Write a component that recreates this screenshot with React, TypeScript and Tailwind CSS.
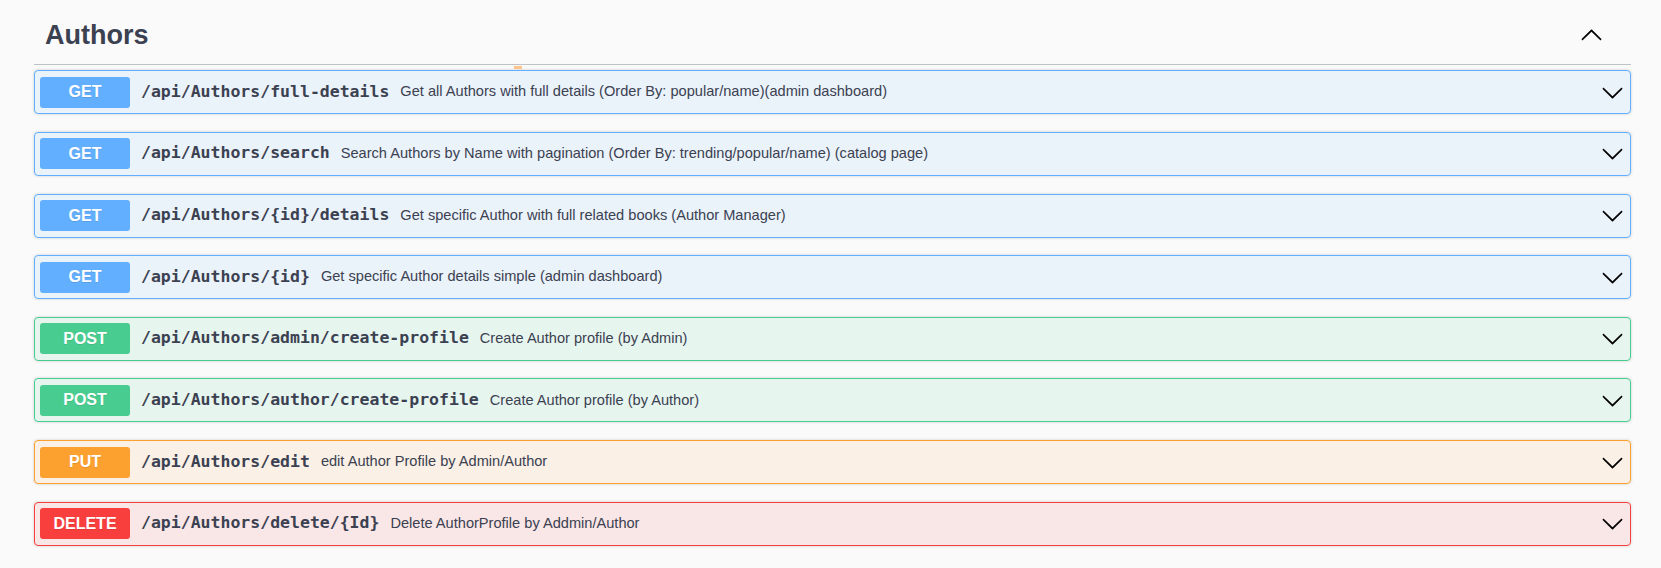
import React from "react";

type Method = "GET" | "POST" | "PUT" | "DELETE";

interface Endpoint {
  method: Method;
  path: string;
  summary: string;
}

const ENDPOINTS: Endpoint[] = [
  { method: "GET", path: "/api/Authors/full-details", summary: "Get all Authors with full details (Order By: popular/name)(admin dashboard)" },
  { method: "GET", path: "/api/Authors/search", summary: "Search Authors by Name with pagination (Order By: trending/popular/name) (catalog page)" },
  { method: "GET", path: "/api/Authors/{id}/details", summary: "Get specific Author with full related books (Author Manager)" },
  { method: "GET", path: "/api/Authors/{id}", summary: "Get specific Author details simple (admin dashboard)" },
  { method: "POST", path: "/api/Authors/admin/create-profile", summary: "Create Author profile (by Admin)" },
  { method: "POST", path: "/api/Authors/author/create-profile", summary: "Create Author profile (by Author)" },
  { method: "PUT", path: "/api/Authors/edit", summary: "edit Author Profile by Admin/Author" },
  { method: "DELETE", path: "/api/Authors/delete/{Id}", summary: "Delete AuthorProfile by Addmin/Author" },
];

// full class strings per method so tailwind picks them up
const METHOD_STYLES: Record<Method, { row: string; badge: string }> = {
  GET: { row: "border-[#61affe] bg-[#61affe]/10", badge: "bg-[#61affe]" },
  POST: { row: "border-[#49cc90] bg-[#49cc90]/10", badge: "bg-[#49cc90]" },
  PUT: { row: "border-[#fca130] bg-[#fca130]/10", badge: "bg-[#fca130]" },
  DELETE: { row: "border-[#f93e3e] bg-[#f93e3e]/10", badge: "bg-[#f93e3e]" },
};

function Arrow({ up = false }: { up?: boolean }) {
  return (
    <svg
      xmlns="http://www.w3.org/2000/svg"
      width="23"
      height="23"
      viewBox="0 0 20 20"
      fill="#000"
      aria-hidden="true"
      className={up ? "rotate-180" : ""}
    >
      <path d="M17.418 6.109c.272-.268.709-.268.979 0s.271.701 0 .969l-7.908 7.83c-.27.268-.707.268-.979 0l-7.908-7.83c-.27-.268-.27-.701 0-.969.271-.268.709-.268.979 0L10 13.25l7.418-7.141z" />
    </svg>
  );
}

function OperationRow({ op }: { op: Endpoint }) {
  const s = METHOD_STYLES[op.method];
  return (
    <div
      className={`flex h-[44px] items-center rounded-[4px] border pl-[5px] pr-[6px] shadow-[0_0_3px_rgba(0,0,0,0.19)] ${s.row}`}
    >
      <span
        className={`flex h-[31px] w-[90px] shrink-0 items-center justify-center rounded-[3px] text-[16px] font-bold text-white [text-shadow:0_1px_0_rgba(0,0,0,0.1)] ${s.badge}`}
        style={{ fontFamily: '"Liberation Sans", Arial, sans-serif' }}
      >
        {op.method}
      </span>
      <span
        className="px-[11px] text-[16.5px] font-bold text-[#3b4151]"
        style={{ fontFamily: '"DejaVu Sans Mono", monospace' }}
      >
        {op.path}
      </span>
      <span
        className="flex-1 text-[14.6px] text-[#3b4151]"
        style={{ fontFamily: '"Liberation Sans", Arial, sans-serif' }}
      >
        {op.summary}
      </span>
      <Arrow />
    </div>
  );
}

export default function App() {
  return (
    <div className="min-h-[568px] bg-[#fafafa] pl-[34px] pr-[30px]">
      {/* Tag header */}
      <div className="relative flex items-center border-b border-[#3b4151]/30 pb-[14px] pl-[11px] pt-[20px]">
        <h3
          className="flex-1 text-[27px] font-bold leading-[30px] text-[#3b4151]"
          style={{ fontFamily: '"Liberation Sans", Arial, sans-serif' }}
        >
          Authors
        </h3>
        <span className="mr-[28px]">
          <Arrow up />
        </span>
        <span className="absolute left-[480px] top-[66px] h-[3px] w-[8px] bg-[#fcc38a]" />
      </div>

      {/* Operations */}
      <div className="mt-[5.2px] flex flex-col gap-[17.66px]">
        {ENDPOINTS.map((op) => (
          <OperationRow key={op.method + op.path} op={op} />
        ))}
      </div>
    </div>
  );
}
